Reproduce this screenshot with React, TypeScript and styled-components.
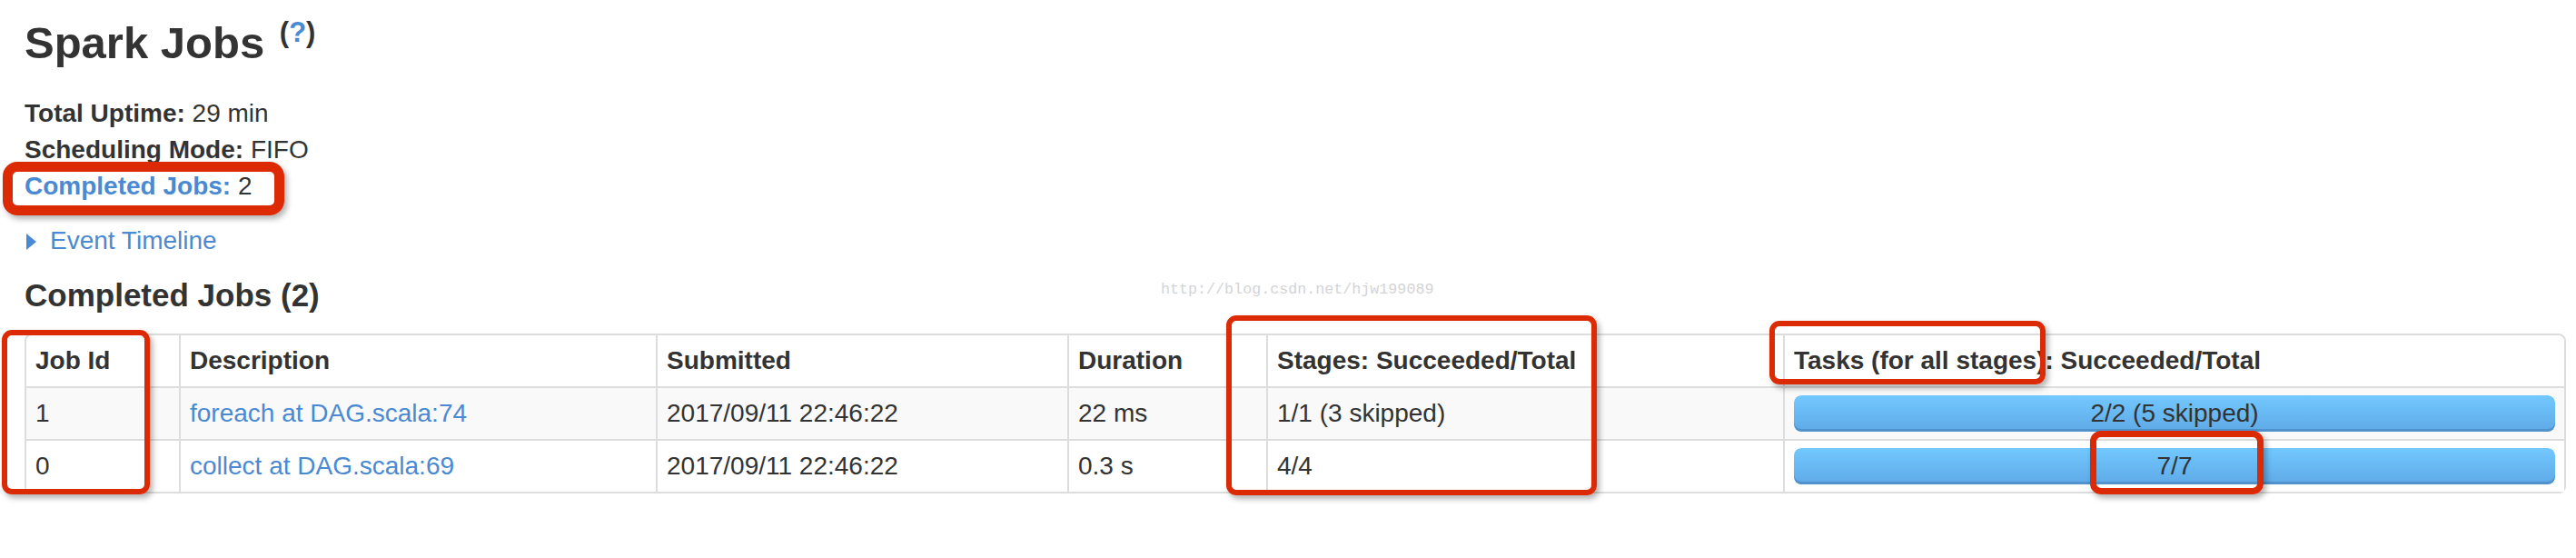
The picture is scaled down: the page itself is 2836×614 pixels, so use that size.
import React from "react";
import styled, { createGlobalStyle } from "styled-components";

const GlobalStyle = createGlobalStyle`
  html, body {
    margin: 0;
    padding: 0;
    background: #ffffff;
  }
  body {
    font-family: "Liberation Sans", Helvetica, Arial, sans-serif;
    font-size: 28px;
    line-height: 40px;
    color: #333333;
  }
  * { box-sizing: border-box; }
`;

const LINK = "#4a8ad3";

const Page = styled.div`
  position: relative;
  width: 2836px;
  height: 614px;
  padding: 7px 11px 0 27px;
`;

const Title = styled.h3`
  margin: 0;
  font-size: 49px;
  line-height: 80px;
  font-weight: bold;
  color: #333333;
`;

const Sup = styled.sup`
  font-size: 31px;
  line-height: 0;
  vertical-align: 18px;
  font-weight: bold;
  margin-left: 3px;
`;

const HelpLink = styled.a`
  color: ${LINK};
  text-decoration: none;
`;

const SummaryList = styled.ul`
  list-style: none;
  margin: 18px 0 0 0;
  padding: 0;
`;

const SummaryItem = styled.li`
  height: 40px;
  line-height: 40px;
`;

const Label = styled.strong<{ $link?: boolean }>`
  font-weight: bold;
  color: ${(p) => (p.$link ? LINK : "#333333")};
`;

const TimelineToggle = styled.div`
  margin-top: 20px;
  height: 40px;
  display: flex;
  align-items: center;
  padding-left: 2px;
`;

const Arrow = styled.span`
  display: inline-block;
  width: 0;
  height: 0;
  border-top: 9.5px solid transparent;
  border-bottom: 9.5px solid transparent;
  border-left: 11px solid ${LINK};
  margin-right: 15px;
  margin-top: 2px;
`;

const TimelineLink = styled.a`
  color: ${LINK};
  text-decoration: none;
`;

const SectionTitle = styled.h4`
  margin: 20px 0 0 0;
  font-size: 35px;
  line-height: 40px;
  font-weight: bold;
  color: #333333;
`;

const JobsTable = styled.table`
  margin-top: 22px;
  width: 2798px;
  table-layout: fixed;
  border-collapse: separate;
  border-spacing: 0;
  border: 2px solid #dddddd;
  border-radius: 8px;
`;

const HeadCell = styled.th<{ $w: number }>`
  width: ${(p) => p.$w}px;
  padding: 8px 10px;
  text-align: left;
  vertical-align: bottom;
  font-weight: bold;
  line-height: 40px;
  white-space: nowrap;
  border-left: 2px solid #dddddd;
  &:first-child { border-left: none; }
`;

const Row = styled.tr<{ $striped?: boolean }>`
  background: ${(p) => (p.$striped ? "#f9f9f9" : "#ffffff")};
`;

const Cell = styled.td`
  padding: 8px 10px;
  line-height: 40px;
  vertical-align: top;
  white-space: nowrap;
  border-left: 2px solid #dddddd;
  border-top: 2px solid #dddddd;
  &:first-child { border-left: none; }
`;

const DescLink = styled.a`
  color: ${LINK};
  text-decoration: none;
`;

const Progress = styled.div`
  position: relative;
  height: 40px;
  border-radius: 8px;
  overflow: hidden;
  background: #f5f5f5;
`;

const Bar = styled.div`
  height: 100%;
  border-radius: 8px;
  background-image: linear-gradient(to bottom, #72c8fe 0%, #5ea9e7 100%);
  box-shadow: inset 0 -3px 0 #4f92cc;
`;

const ProgressText = styled.span`
  position: absolute;
  left: 0;
  top: 0;
  width: 100%;
  text-align: center;
  line-height: 40px;
  color: #333333;
`;

const Watermark = styled.div`
  position: absolute;
  left: 1278px;
  top: 310px;
  font-family: "Liberation Mono", "Courier New", monospace;
  font-size: 16.7px;
  line-height: 17px;
  color: #d4d4d4;
  white-space: nowrap;
  pointer-events: none;
`;

const Annotation = styled.div<{
  $x: number;
  $y: number;
  $w: number;
  $h: number;
  $t: number;
}>`
  position: absolute;
  left: ${(p) => p.$x}px;
  top: ${(p) => p.$y}px;
  width: ${(p) => p.$w}px;
  height: ${(p) => p.$h}px;
  border: ${(p) => p.$t}px solid #dc2a04;
  border-radius: ${(p) => p.$t + 5}px;
  box-shadow: 3px 4px 6px rgba(0, 0, 0, 0.3);
  pointer-events: none;
`;

const columns = [
  { name: "Job Id", w: 168 },
  { name: "Description", w: 525 },
  { name: "Submitted", w: 453 },
  { name: "Duration", w: 219 },
  { name: "Stages: Succeeded/Total", w: 569 },
  { name: "Tasks (for all stages): Succeeded/Total", w: 860 },
];

const jobs = [
  {
    id: "1",
    desc: "foreach at DAG.scala:74",
    submitted: "2017/09/11 22:46:22",
    duration: "22 ms",
    stages: "1/1 (3 skipped)",
    tasks: "2/2 (5 skipped)",
    pct: 100,
  },
  {
    id: "0",
    desc: "collect at DAG.scala:69",
    submitted: "2017/09/11 22:46:22",
    duration: "0.3 s",
    stages: "4/4",
    tasks: "7/7",
    pct: 100,
  },
];

const annotations = [
  { x: 3, y: 178, w: 310, h: 59, t: 11 },
  { x: 2, y: 363, w: 163, h: 181, t: 6 },
  { x: 1350, y: 347, w: 408, h: 198, t: 6 },
  { x: 1948, y: 353, w: 304, h: 70, t: 6 },
  { x: 2301, y: 474, w: 191, h: 70, t: 7 },
];

export default function App() {
  return (
    <>
      <GlobalStyle />
      <Page>
        <Title>
          Spark Jobs{" "}
          <Sup>
            (<HelpLink href="#">?</HelpLink>)
          </Sup>
        </Title>
        <SummaryList>
          <SummaryItem>
            <Label>Total Uptime:</Label> 29 min
          </SummaryItem>
          <SummaryItem>
            <Label>Scheduling Mode:</Label> FIFO
          </SummaryItem>
          <SummaryItem>
            <Label $link>Completed Jobs:</Label> 2
          </SummaryItem>
        </SummaryList>
        <TimelineToggle>
          <Arrow />
          <TimelineLink href="#">Event Timeline</TimelineLink>
        </TimelineToggle>
        <SectionTitle>Completed Jobs (2)</SectionTitle>
        <JobsTable>
          <thead>
            <tr>
              {columns.map((c) => (
                <HeadCell key={c.name} $w={c.w}>
                  {c.name}
                </HeadCell>
              ))}
            </tr>
          </thead>
          <tbody>
            {jobs.map((j, i) => (
              <Row key={j.id} $striped={i % 2 === 0}>
                <Cell>{j.id}</Cell>
                <Cell>
                  <DescLink href="#">{j.desc}</DescLink>
                </Cell>
                <Cell>{j.submitted}</Cell>
                <Cell>{j.duration}</Cell>
                <Cell>{j.stages}</Cell>
                <Cell>
                  <Progress>
                    <ProgressText>{j.tasks}</ProgressText>
                    <Bar style={{ width: `${j.pct}%` }} />
                  </Progress>
                </Cell>
              </Row>
            ))}
          </tbody>
        </JobsTable>
        <Watermark>http://blog.csdn.net/hjw199089</Watermark>
        {annotations.map((a, i) => (
          <Annotation key={i} $x={a.x} $y={a.y} $w={a.w} $h={a.h} $t={a.t} />
        ))}
      </Page>
    </>
  );
}
